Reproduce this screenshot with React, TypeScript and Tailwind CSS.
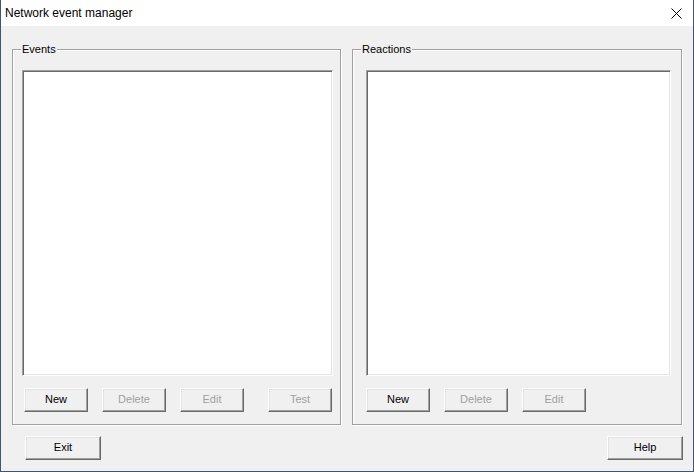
import React from "react"

const font = { fontFamily: '"Liberation Sans", Arial, sans-serif' }

function Btn({ label, disabled, className = "" }: { label: string; disabled?: boolean; className?: string }) {
  return (
    <div
      className={`h-[24px] flex items-center justify-center pb-[2px] bg-[#f0f0f0] border border-t-white border-l-white border-r-[#696969] border-b-[#696969] shadow-[inset_-1px_-1px_0_#a0a0a0,inset_1px_1px_0_#e3e3e3] text-[11px] ${disabled ? "text-[#a0a0a0]" : "text-black"} ${className}`}
    >
      {label}
    </div>
  )
}

function ListBox({ className = "" }: { className?: string }) {
  return (
    <div
      className={`bg-white border border-t-[#a0a0a0] border-l-[#a0a0a0] border-r-white border-b-white shadow-[inset_1px_1px_0_#696969,inset_-1px_-1px_0_#e3e3e3] ${className}`}
    />
  )
}

function Group({ title, children, className = "" }: { title: string; children: React.ReactNode; className?: string }) {
  return (
    <div
      className={`relative h-[376px] border border-[#a0a0a0] shadow-[1px_1px_0_white,inset_1px_1px_0_white] ${className}`}
    >
      <span className="absolute left-[8px] top-[-8px] bg-[#f0f0f0] px-[1px] text-[11px] leading-[14px] text-black">
        {title}
      </span>
      {children}
    </div>
  )
}

export default function App() {
  return (
    <div style={font} className="w-[694px] h-[472px] flex flex-col bg-[#f0f0f0] border-x border-b border-[#40566e] overflow-hidden">
      <div className="h-[26px] bg-white flex items-center justify-between pl-[4px] pr-[10px] shrink-0">
        <span className="text-[12px] text-black">Network event manager</span>
        <svg width="11" height="11" viewBox="0 0 11 11" className="mr-[1px]">
          <path d="M0.5 0.5 L10.5 10.5 M10.5 0.5 L0.5 10.5" stroke="#000" strokeWidth="1" />
        </svg>
      </div>
      <div className="flex-1 flex flex-col pl-[11px] pt-[23px]">
        <div className="flex">
          <Group title="Events" className="w-[329px]">
            <ListBox className="ml-[9px] mt-[20px] w-[311px] h-[306px]" />
            <div className="flex ml-[11px] mt-[12px]">
              <Btn label="New" className="w-[64px]" />
              <Btn label="Delete" disabled className="w-[64px] ml-[14px]" />
              <Btn label="Edit" disabled className="w-[64px] ml-[14px]" />
              <Btn label="Test" disabled className="w-[64px] ml-[24px]" />
            </div>
          </Group>
          <Group title="Reactions" className="w-[330px] ml-[11px]">
            <ListBox className="ml-[13px] mt-[20px] w-[305px] h-[306px]" />
            <div className="flex ml-[13px] mt-[12px]">
              <Btn label="New" className="w-[64px]" />
              <Btn label="Delete" disabled className="w-[64px] ml-[14px]" />
              <Btn label="Edit" disabled className="w-[64px] ml-[14px]" />
            </div>
          </Group>
        </div>
        <div className="flex justify-between mt-[11px] pl-[13px] pr-[10px]">
          <Btn label="Exit" className="w-[76px]" />
          <Btn label="Help" className="w-[76px]" />
        </div>
      </div>
    </div>
  )
}
